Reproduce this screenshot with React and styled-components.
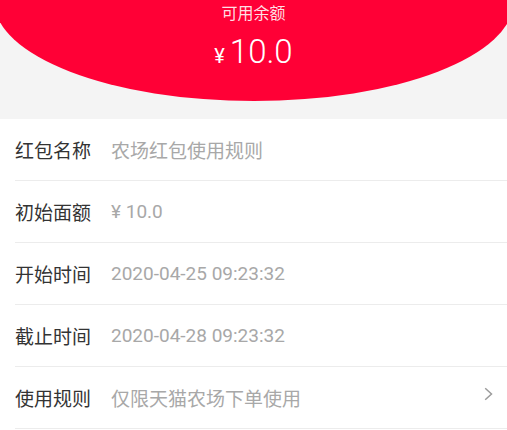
import React from 'react';
import styled, { createGlobalStyle } from 'styled-components';

const rows = [
  { label: '红包名称', value: '农场红包使用规则' },
  { label: '初始面额', value: '¥ 10.0' },
  { label: '开始时间', value: '2020-04-25 09:23:32' },
  { label: '截止时间', value: '2020-04-28 09:23:32' },
  { label: '使用规则', value: '仅限天猫农场下单使用', link: true },
];

export default function App() {
  return (
    <Page>
      <GlobalStyle />
      <Banner>
        <Arc>
          <Caption>可用余额</Caption>
          <Amount>
            <Yen>¥</Yen>
            10.0
          </Amount>
        </Arc>
      </Banner>
      <List>
        {rows.map((row) => (
          <Row key={row.label}>
            <Label>{row.label}</Label>
            <Value>{row.value}</Value>
            {row.link && (
              <Chevron viewBox="0 0 9 14" width="9" height="14">
                <path d="M1.2 1.2l6.3 5.8-6.3 5.8" fill="none" stroke="#9b9b9b" strokeWidth="1.5" />
              </Chevron>
            )}
          </Row>
        ))}
      </List>
    </Page>
  );
}

const GlobalStyle = createGlobalStyle`
  body {
    margin: 0;
    background: #fff;
    font-family: Roboto, "Noto Sans CJK SC", sans-serif;
  }
`;

const Page = styled.div`
  width: 507px;
  overflow: hidden;
`;

const Banner = styled.div`
  height: 119px;
  background: #f4f4f4;
  display: flex;
  justify-content: center;
  overflow: hidden;
`;

const Arc = styled.div`
  flex-shrink: 0;
  width: 520px;
  height: 200px;
  margin-top: -99px;
  padding-top: 102px;
  box-sizing: border-box;
  border-radius: 50%;
  background: #ff0036;
  display: flex;
  flex-direction: column;
  align-items: center;
  color: #fff;
`;

const Caption = styled.div`
  font-size: 16px;
  line-height: 22px;
  color: rgba(255, 255, 255, 0.88);
`;

const Amount = styled.div`
  display: flex;
  align-items: baseline;
  margin-top: 7px;
  font-size: 33px;
  font-weight: 300;
  line-height: 40px;
`;

const Yen = styled.span`
  font-size: 20px;
  font-weight: 400;
  margin-right: 5px;
`;

const List = styled.div`
  background: #fff;
`;

const Row = styled.div`
  display: flex;
  align-items: center;
  height: 62px;
  box-sizing: border-box;
  margin-left: 15px;
  padding-right: 14px;
  border-bottom: 1px solid #ececec;
  font-size: 19px;
`;

const Label = styled.span`
  color: #333;
  margin-right: 20px;
`;

const Value = styled.span`
  flex: 1;
  color: #a8a8a8;
`;

const Chevron = styled.svg`
  margin-top: -8px;
`;
